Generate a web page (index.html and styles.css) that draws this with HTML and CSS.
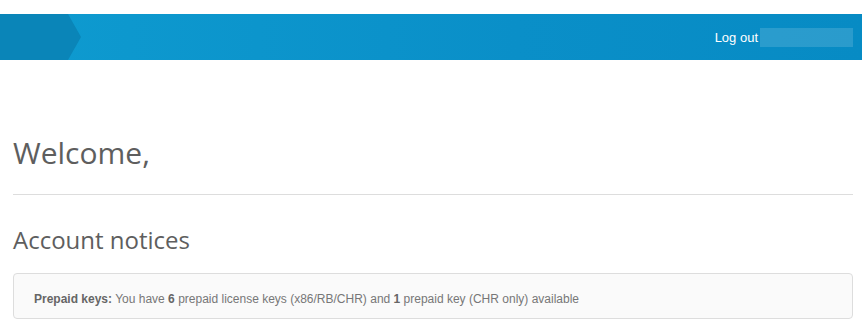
FILE: index.html
```html
<!DOCTYPE html>
<html lang="en">
<head>
    <meta charset="UTF-8">
    <title>Account</title>
    <link rel="stylesheet" href="styles.css">
</head>
<body>
    <div class="topbar">
        <div class="logo-arrow"></div>
        <div class="user-nav">
            <span class="logout">Log out</span>
            <span class="username"></span>
        </div>
    </div>

    <div class="content">
        <h1 class="page-title">Welcome,</h1>
        <hr class="divider">
        <h2 class="section-title">Account notices</h2>
        <div class="notice">
            <b>Prepaid keys:</b> You have <b>6</b> prepaid license keys (x86/RB/CHR) and <b>1</b> prepaid key (CHR only) available
        </div>
    </div>
</body>
</html>
```

FILE: styles.css
```css
body {
    margin: 0;
    padding-top: 14px;
    font-family: "Liberation Sans", Arial, sans-serif;
    color: #777;
    background: #fff;
}
.topbar {
    height: 46px;
    background: linear-gradient(to right, #0e9bd0 0%, #0a8fc8 60%, #078bc4 100%);
    display: flex;
    align-items: center;
    justify-content: flex-end;
    position: relative;
}
.logo-arrow {
    position: absolute;
    left: 0;
    top: 0;
    width: 81px;
    height: 46px;
    background: #0a85b8;
    clip-path: polygon(0 0, 68px 0, 81px 23px, 68px 46px, 0 46px);
}
.user-nav {
    display: flex;
    align-items: center;
    padding-right: 9px;
}
.logout {
    color: #fff;
    font-size: 13px;
    margin-right: 2px;
}
.username {
    display: block;
    width: 93px;
    height: 19px;
    background: rgba(255, 255, 255, 0.14);
}
.content {
    padding: 0 9px 0 13px;
}
.page-title {
    font-family: "Open Sans", sans-serif;
    font-weight: normal;
    font-size: 30px;
    color: #5e5e5e;
    margin: 73px 0 0;
    line-height: 40px;
}
.divider {
    border: 0;
    border-top: 1px solid #ddd;
    margin: 21px 0 0;
}
.section-title {
    font-family: "Open Sans", sans-serif;
    font-weight: normal;
    font-size: 24px;
    color: #5e5e5e;
    margin: 28px 0 0;
    line-height: 34px;
}
.notice {
    margin-top: 16px;
    border: 1px solid #ddd;
    border-radius: 4px;
    background: #fafafa;
    padding: 19px 20px 13px;
    font-size: 12px;
    line-height: 12px;
}
.notice b {
    color: #666;
}
```
